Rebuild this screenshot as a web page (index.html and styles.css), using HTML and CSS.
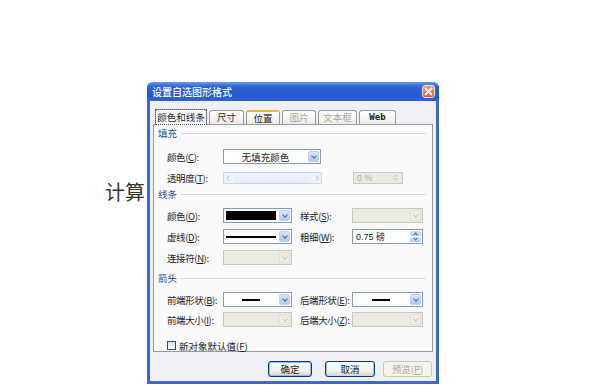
FILE: index.html
```html
<!DOCTYPE html>
<html lang="zh-CN">
<head>
    <meta charset="UTF-8">
    <title>设置自选图形格式</title>
    <link rel="stylesheet" href="styles.css">
</head>
<body>
    <div class="page">
        <div class="doc-text">计算</div>
        <div class="dialog">
            <div class="titlebar">
                <span class="title">设置自选图形格式</span>
                <span class="close">
                    <svg width="9" height="9" viewBox="0 0 9 9"><path d="M1 1 L8 8 M8 1 L1 8" stroke="#fff" stroke-width="2" fill="none"/></svg>
                </span>
            </div>
            <div class="tabs">
                <span class="tab selected"><span class="focus">颜色和线条</span></span>
                <span class="tab t2">尺寸</span>
                <span class="tab t3 hot">位置</span>
                <span class="tab t4 disabled">图片</span>
                <span class="tab t5 disabled">文本框</span>
                <span class="tab t6 web">Web</span>
            </div>
            <div class="panel">
                <div class="section-head">填充</div>
                <div class="row r1">
                    <span class="label">颜色(<u>C</u>):</span>
                    <span class="combo wide"><span class="value">无填充颜色</span><span class="arrow"></span></span>
                </div>
                <div class="row r2">
                    <span class="label">透明度(<u>T</u>):</span>
                    <span class="slider"><span class="sbtn left"></span><span class="track"></span><span class="sbtn right"></span></span>
                    <span class="spin disabled small"><span class="value">0 %</span><span class="spinbtn"><i class="up"></i><i class="down"></i></span></span>
                </div>
                <div class="section-head h2">线条</div>
                <div class="row r3">
                    <span class="label">颜色(<u>O</u>):</span>
                    <span class="combo"><span class="value"><span class="swatch"></span></span><span class="arrow"></span></span>
                    <span class="label label2">样式(<u>S</u>):</span>
                    <span class="combo disabled right-col"><span class="value"></span><span class="arrow"></span></span>
                </div>
                <div class="row r4">
                    <span class="label">虚线(<u>D</u>):</span>
                    <span class="combo"><span class="value"><span class="line"></span></span><span class="arrow"></span></span>
                    <span class="label label2">粗细(<u>W</u>):</span>
                    <span class="spin right-col"><span class="value">0.75 磅</span><span class="spinbtn"><i class="up"></i><i class="down"></i></span></span>
                </div>
                <div class="row r5">
                    <span class="label">连接符(<u>N</u>):</span>
                    <span class="combo disabled"><span class="value"></span><span class="arrow"></span></span>
                </div>
                <div class="section-head h3">箭头</div>
                <div class="row r6">
                    <span class="label">前端形状(<u>B</u>):</span>
                    <span class="combo"><span class="value"><span class="dash"></span></span><span class="arrow"></span></span>
                    <span class="label label2">后端形状(<u>E</u>):</span>
                    <span class="combo right-col"><span class="value"><span class="dash"></span></span><span class="arrow"></span></span>
                </div>
                <div class="row r7">
                    <span class="label">前端大小(<u>I</u>):</span>
                    <span class="combo disabled"><span class="value"></span><span class="arrow"></span></span>
                    <span class="label label2">后端大小(<u>Z</u>):</span>
                    <span class="combo disabled right-col"><span class="value"></span><span class="arrow"></span></span>
                </div>
                <div class="row check-row">
                    <span class="checkbox"></span>
                    <span class="check-label">新对象默认值(<u>F</u>)</span>
                </div>
            </div>
            <div class="buttons">
                <span class="btn ok">确定</span>
                <span class="btn cancel">取消</span>
                <span class="btn preview disabled">预览(<u>P</u>)</span>
            </div>
        </div>
    </div>
</body>
</html>
```

FILE: styles.css
```css
body {
    margin: 0;
    background: #fff;
    font-family: "Noto Sans CJK SC", "Noto Sans", sans-serif;
    color: #222;
}
.page {
    display: flex;
    align-items: flex-start;
    padding: 82px 0 0 105px;
}
.doc-text {
    width: 42px;
    margin-top: 96px;
    font-size: 20px;
    line-height: 28px;
    color: #333;
    white-space: nowrap;
}
.dialog {
    width: 292px;
    height: 302px;
    box-sizing: border-box;
    background: #efeff4;
    border: 3px solid #3d69c9;
    border-top: 0;
    border-radius: 6px 6px 0 0;
    display: flex;
    flex-direction: column;
}
.titlebar {
    height: 19px;
    margin: 0 -3px;
    padding: 0 4px 0 5px;
    display: flex;
    align-items: center;
    justify-content: space-between;
    background: linear-gradient(#6b9be9, #2d63d5 25%, #2459cf 65%, #2c63d6);
    border-radius: 6px 6px 0 0;
}
.title {
    color: #fff;
    font-size: 10px;
    font-weight: 500;
}
.close {
    width: 13px;
    height: 13px;
    box-sizing: border-box;
    border: 1px solid #f3e3dc;
    border-radius: 3px;
    background: linear-gradient(#ee9a7c, #dc5a32);
    display: flex;
    align-items: center;
    justify-content: center;
}
.tabs {
    margin-top: 8px;
    padding-left: 5px;
    height: 15px;
    display: flex;
    align-items: flex-end;
    gap: 2px;
    position: relative;
    z-index: 1;
}
.tab {
    height: 14px;
    box-sizing: border-box;
    border: 1px solid #919b9c;
    border-bottom: 0;
    border-radius: 3px 3px 0 0;
    background: linear-gradient(#ffffff, #ecebe6);
    font-size: 9.5px;
    line-height: 13px;
    text-align: center;
    white-space: nowrap;
}
.tab.selected {
    width: 52px;
    height: 16px;
    margin-bottom: -1px;
    background: #fcfcfe;
    padding-top: 1px;
}
.tab .focus {
    outline: 1px dotted #555;
    padding: 0 1px;
}
.t2 { width: 35px; }
.t3 { width: 34px; }
.t4 { width: 34px; }
.t5 { width: 39px; }
.t6 { width: 37px; }
.tab.hot {
    border-top: 2px solid #f4b23c;
    line-height: 12px;
}
.tab.disabled {
    color: #aca899;
}
.tab.web {
    font-family: "DejaVu Sans Mono", monospace;
    font-weight: 700;
    font-size: 9px;
}
.panel {
    margin: 0 3px;
    height: 228px;
    box-sizing: border-box;
    border: 1px solid #919b9c;
    background: #fafafb;
    padding-top: 2px;
}
.section-head {
    height: 12px;
    padding-left: 4px;
    display: flex;
    align-items: center;
    font-size: 9.5px;
    color: #2b4a8f;
}
.section-head::after {
    content: "";
    flex: 1;
    height: 1px;
    background: #d8d9e2;
    margin: 0 6px 0 4px;
}
.h2 { margin-top: 3px; }
.h3 { margin-top: 7px; }
.row {
    height: 15px;
    padding-left: 13px;
    display: flex;
    align-items: center;
    font-size: 9.5px;
    white-space: nowrap;
}
.r1 { margin-top: 10px; }
.r2 { margin-top: 6px; }
.r3 { margin-top: 8px; }
.r4 { margin-top: 6px; }
.r5 { margin-top: 6px; }
.r6 { margin-top: 8px; }
.r7 { margin-top: 5px; }
.label {
    width: 56px;
    flex-shrink: 0;
    letter-spacing: -0.4px;
}
.label2 {
    margin-left: 8px;
    width: 52px;
}
.combo {
    width: 69px;
    height: 15px;
    box-sizing: border-box;
    border: 1px solid #7f9db9;
    background: #fff;
    display: flex;
    flex-shrink: 0;
}
.combo.wide {
    width: 98px;
}
.combo.right-col {
    width: 71px;
}
.combo .value {
    flex: 1;
    display: flex;
    align-items: center;
    justify-content: center;
    font-size: 9.5px;
}
.arrow {
    width: 11px;
    margin: 1px;
    border-radius: 2px;
    background: linear-gradient(#d7e3fb, #b2c8f5);
    border: 1px solid #bccff5;
    box-sizing: border-box;
    display: flex;
    align-items: center;
    justify-content: center;
}
.arrow::after {
    content: "";
    width: 3px;
    height: 3px;
    border-right: 1.5px solid #4d6185;
    border-bottom: 1.5px solid #4d6185;
    transform: translateY(-1px) rotate(45deg);
}
.combo.disabled {
    border-color: #c9c7ba;
    background: #ebebe4;
}
.combo.disabled .arrow {
    background: #eeede5;
    border-color: #e2e1d9;
}
.combo.disabled .arrow::after {
    border-color: #c9c7ba;
}
.swatch {
    flex: 1;
    align-self: stretch;
    margin: 2px;
    background: #000;
}
.line {
    flex: 1;
    height: 2px;
    margin: 0 2px;
    background: #000;
}
.dash {
    width: 18px;
    height: 2px;
    background: #000;
}
.slider {
    width: 99px;
    height: 12px;
    box-sizing: border-box;
    border: 1px solid #c8d6f3;
    background: linear-gradient(#f2f5fc, #e3eaf8);
    display: flex;
}
.track {
    flex: 1;
}
.sbtn {
    width: 10px;
    display: flex;
    align-items: center;
    justify-content: center;
    background: #eef2fb;
}
.sbtn::after {
    content: "";
    width: 3px;
    height: 3px;
    border-left: 1px solid #c2c9d8;
    border-bottom: 1px solid #c2c9d8;
}
.sbtn.left::after { transform: rotate(45deg); }
.sbtn.right::after { transform: rotate(-135deg); }
.spin {
    height: 15px;
    box-sizing: border-box;
    border: 1px solid #7f9db9;
    background: #fff;
    display: flex;
    flex-shrink: 0;
}
.spin.right-col {
    width: 71px;
}
.spin.small {
    width: 50px;
    height: 12px;
    margin-left: 31px;
}
.spin .value {
    flex: 1;
    padding-left: 3px;
    display: flex;
    align-items: center;
    font-size: 9px;
    font-family: "Liberation Sans", "Noto Sans CJK SC", sans-serif;
}
.spinbtn {
    width: 11px;
    margin: 1px;
    display: flex;
    flex-direction: column;
    gap: 1px;
}
.spinbtn i {
    flex: 1;
    border-radius: 2px;
    background: linear-gradient(#d7e3fb, #b2c8f5);
    display: flex;
    align-items: center;
    justify-content: center;
}
.spinbtn i::after {
    content: "";
    width: 2px;
    height: 2px;
    border-left: 1px solid #4d6185;
    border-top: 1px solid #4d6185;
}
.spinbtn .up::after { transform: translateY(1px) rotate(45deg); }
.spinbtn .down::after { transform: translateY(-1px) rotate(-135deg); }
.spin.disabled {
    border-color: #c9c7ba;
    background: #ebebe4;
    color: #aca899;
}
.spin.disabled .spinbtn i {
    background: #eeede5;
}
.spin.disabled .spinbtn i::after {
    border-color: #c9c7ba;
}
.check-row {
    margin-top: 13px;
    height: 11px;
}
.checkbox {
    width: 9px;
    height: 9px;
    box-sizing: border-box;
    border: 1px solid #1c5180;
    background: linear-gradient(#e5e4de, #fff);
}
.check-label {
    margin-left: 3px;
}
.buttons {
    margin-top: 9px;
    padding-right: 4px;
    display: flex;
    justify-content: flex-end;
}
.btn {
    height: 16px;
    box-sizing: border-box;
    border: 1px solid #003c74;
    border-radius: 3px;
    background: linear-gradient(#ffffff, #f3f3ef 60%, #d9d4ca);
    box-shadow: inset 1px 0 0 #a9bde8, inset -1px 0 0 #a9bde8;
    font-size: 9.5px;
    line-height: 14px;
    text-align: center;
    white-space: nowrap;
}
.btn.ok {
    width: 44px;
    box-shadow: inset 0 0 0 1px #9fb6ea;
}
.btn.cancel {
    width: 50px;
    margin-left: 13px;
}
.btn.preview {
    width: 49px;
    margin-left: 8px;
}
.btn.disabled {
    border-color: #c9c7ba;
    background: #f5f4ea;
    box-shadow: none;
    color: #aca899;
}
```
